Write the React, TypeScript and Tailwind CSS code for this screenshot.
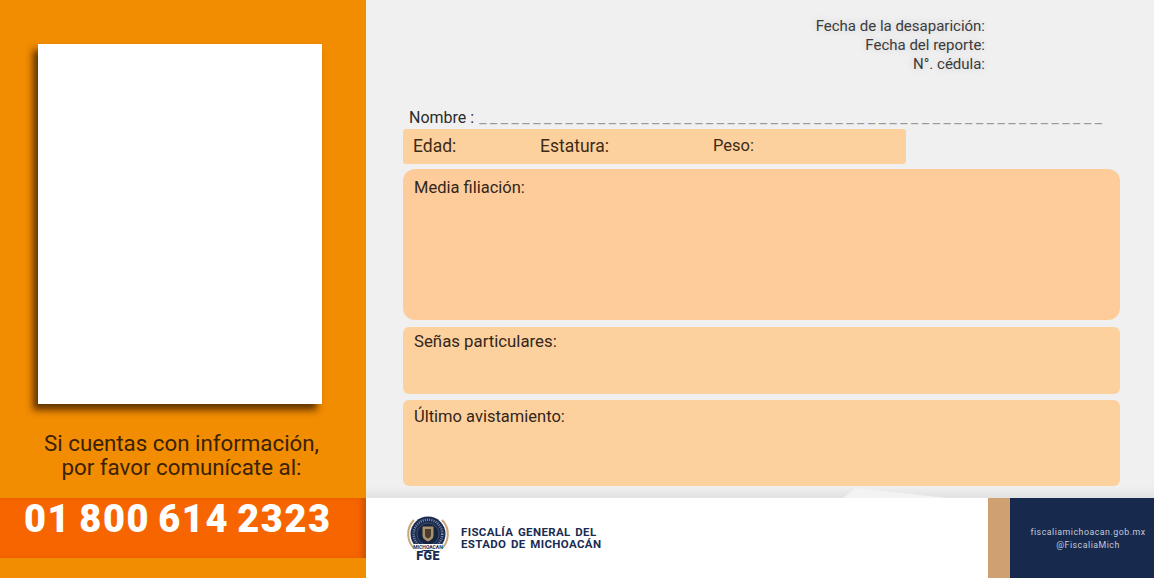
const font = "font-['Roboto',sans-serif]"

function Logo() {
  return (
    <div className="relative h-[44px] w-[46px]">
      <svg width="46" height="44" viewBox="0 0 46 44" fill="none">
        {/* laurel */}
        <path d="M10 34 A20 20 0 0 1 8 4" stroke="#c9a77c" strokeWidth="2" />
        <path d="M34 34 A20 20 0 0 0 36 4" stroke="#c9a77c" strokeWidth="2" />
        <circle cx="22" cy="18" r="17.500" fill="#1a2c52" />
        <circle cx="22" cy="18" r="11" fill="#14233f" stroke="#5d6a85" strokeWidth="0.6" />
        <circle cx="22" cy="18" r="14.300" stroke="#aab2c2" strokeWidth="2.400" strokeDasharray="1 1.200" opacity="0.75" />
        {/* escudo */}
        <path d="M16.500 10.500h11v9c0 3-2.800 4.800-5.500 6-2.700-1.200-5.500-3-5.500-6z" fill="#a98f6b" />
        <path d="M19 13h6v6c0 1.700-1.500 2.900-3 3.500-1.500-.6-3-1.800-3-3.500z" fill="#4a3d2c" />
        <rect x="8" y="28" width="28" height="6" fill="#ffffff" />
        <text x="22" y="33" textAnchor="middle" fontSize="5" fontWeight="700" fontFamily="Roboto, sans-serif" fill="#1a2c52">
          MICHOACAN
        </text>
      </svg>
      <span className={`${font} absolute -bottom-[1px] left-0 w-[44px] text-center text-[12.500px] leading-[10px] font-black tracking-[0.4px] text-[#1a2c52]`}>FGE</span>
    </div>
  )
}

export default function App() {
  const shadow = '[text-shadow:0_0_8px_rgba(0,0,0,0.18)]'

  return (
    <div className={`${font} flex h-[578px] w-[1154px] overflow-hidden bg-[#f0f0f0]`}>
      {/* columna izquierda */}
      <div className="flex w-[366px] shrink-0 flex-col bg-[#f28c00]">
        <div className="mt-[44px] ml-[38px] h-[360px] w-[284px] bg-white shadow-[-5px_6px_7px_rgba(70,35,0,0.85)]" />
        <p className="mt-[27px] pr-[3px] text-center text-[22.300px] leading-[24px] text-[#3a2208]">
          Si cuentas con información,
          <br />
          por favor comunícate al:
        </p>
        <div className="mt-[19px] h-[60px] bg-[#f76500] pt-[1px] pl-[24px] text-[38px] leading-[40px] font-black tracking-[1.600px] [word-spacing:-3px] text-white shadow-[inset_-6px_0_6px_-3px_rgba(150,60,0,0.5)]">
          01 800 614 2323
        </div>
      </div>

      {/* columna derecha */}
      <div className="flex flex-1 flex-col">
        <div className="flex-1 pr-[34px] pl-[37px] text-[#33291f]">
          <div className={`mt-[17px] pr-[135px] text-right text-[15px] leading-[19px] text-[#3b3b3b] ${shadow}`}>
            <p>Fecha de la desaparición:</p>
            <p>Fecha del reporte:</p>
            <p>N°. cédula:</p>
          </div>

          <div className="mt-[34px] flex h-[20px] items-center pl-[6px] text-[16px] leading-[20px] text-[#2c2c2c]">
            <span>Nombre :</span>
            <span className="ml-[5px] tracking-[3.580px] text-[#9a9a9a]">{'_'.repeat(58)}</span>
          </div>

          <div className="mt-[1px] flex h-[35px] w-[503px] items-center rounded-[3px] bg-[#fdd19e] pl-[10px] text-[17.500px] text-[#3d2b16]">
            <span className="w-[127px]">Edad:</span>
            <span className="w-[173px]">Estatura:</span>
            <span className="text-[16.500px]">Peso:</span>
          </div>

          <div className="mt-[5px] h-[151px] rounded-[12px] bg-[#fdcc9a] pt-[9px] pl-[11px] text-[16.500px] leading-[20px] text-[#33261a]">
            Media filiación:
          </div>

          <div className="mt-[7px] h-[67px] rounded-[6px] bg-[#fdd19e] pt-[4px] pl-[11px] text-[16.800px] leading-[20px] text-[#33261a]">
            Señas particulares:
          </div>

          <div className="mt-[6px] h-[86px] rounded-[6px] bg-[#fdd19e] pt-[7px] pl-[11px] text-[16.500px] leading-[20px] text-[#33261a]">
            Último avistamiento:
          </div>
        </div>

        {/* pie */}
        <div className="relative flex h-[80px] shrink-0">
          <div className="absolute -top-[12px] right-0 left-0 h-[12px] bg-gradient-to-b from-[#f0f0f0] to-[#e2e2e2]" />
          <div className="absolute -top-[10px] left-[477px] h-[10px] w-[104px] bg-[#f3f3f3] [clip-path:polygon(0_100%,12%_0,100%_100%)]" />
          <div className="flex flex-1 items-center bg-white pl-[40px]">
            <Logo />
            <div className="ml-[9px] text-[11.500px] leading-[12px] font-bold tracking-[0.35px] [word-spacing:1.500px] text-[#1a2c52]">
              <p>FISCALÍA GENERAL DEL</p>
              <p>ESTADO DE MICHOACÁN</p>
            </div>
          </div>
          <div className="w-[22px] bg-[#cfa071]" />
          <div className="flex w-[144px] flex-col items-center justify-center bg-[#17294d] pt-[1px] pl-[12px] text-[8.800px] leading-[13px] tracking-[0.5px] text-[#c5cad6]">
            <p>fiscaliamichoacan.gob.mx</p>
            <p>@FiscaliaMich</p>
          </div>
        </div>
      </div>
    </div>
  )
}
